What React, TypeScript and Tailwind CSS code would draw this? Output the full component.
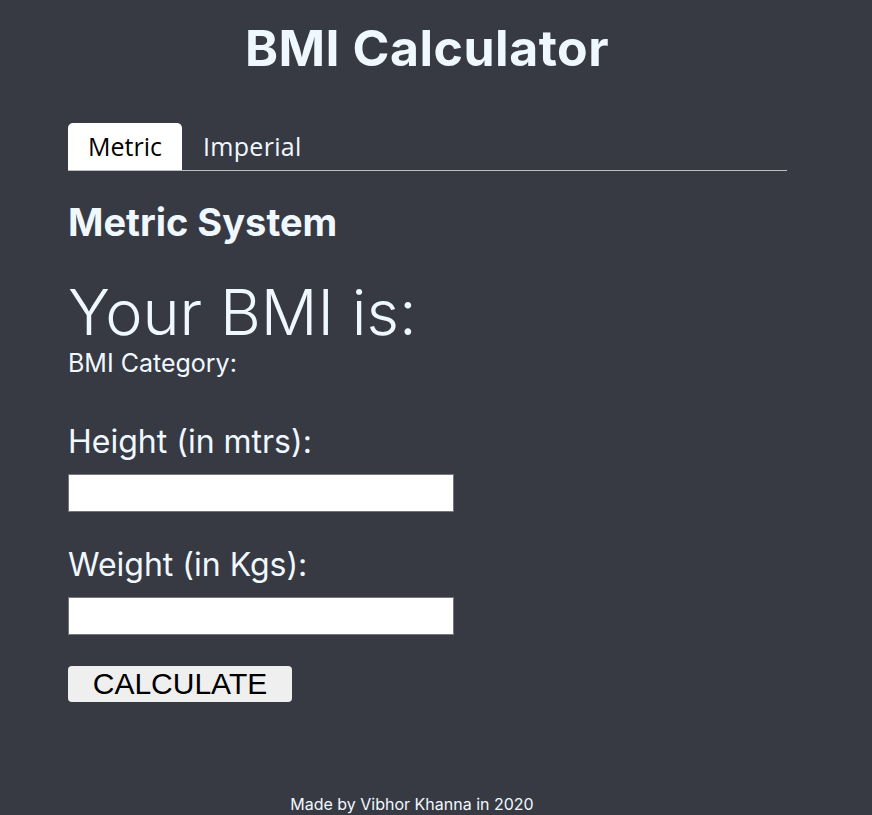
import React from "react";

export default function App() {
  return (
    <div className="min-h-[815px] bg-[#383a43] text-[#f0f8ff] flex flex-col" style={{ fontFamily: "Inter, 'DejaVu Sans', sans-serif" }}>
      <h1 className="text-center text-[50px] font-bold leading-none pt-[23px] pr-[18px] tracking-[0.5px]">BMI Calculator</h1>
      <div className="ml-[68px] mt-[50px] w-[719px]">
        <div className="flex items-end border-b border-[#bdbdbd]" style={{ fontFamily: "'Open Sans', sans-serif" }}>
          <div className="w-[114px] h-[47px] bg-white text-black rounded-t-[5px] text-[25px] flex items-center justify-center">Metric</div>
          <div className="h-[47px] pl-[21px] text-[25px] flex items-center tracking-[0.3px]">Imperial</div>
        </div>
        <h2 className="text-[38px] font-bold leading-none mt-[32px]">Metric System</h2>
        <div className="text-[63px] font-light leading-none mt-[40px]">Your BMI is:</div>
        <div className="text-[25px] leading-none mt-[7px]">BMI Category:</div>
        <div className="text-[32px] leading-none mt-[50px]">Height (in mtrs):</div>
        <input className="block mt-[16px] w-[386px] h-[38px] bg-white border border-[#767676]" />
        <div className="text-[32px] leading-none mt-[37px]">Weight (in Kgs):</div>
        <input className="block mt-[16px] w-[386px] h-[38px] bg-white border border-[#767676]" />
        <button className="block mt-[31px] w-[224px] h-[36px] bg-[#efefef] rounded-[4px] text-black text-[30px] leading-none" style={{ fontFamily: "'Liberation Sans', Arial, sans-serif" }}>CALCULATE</button>
      </div>
      <div className="mt-auto text-center text-[16px] leading-none pr-[48px] pb-[3px]">Made by Vibhor Khanna in 2020</div>
    </div>
  );
}
